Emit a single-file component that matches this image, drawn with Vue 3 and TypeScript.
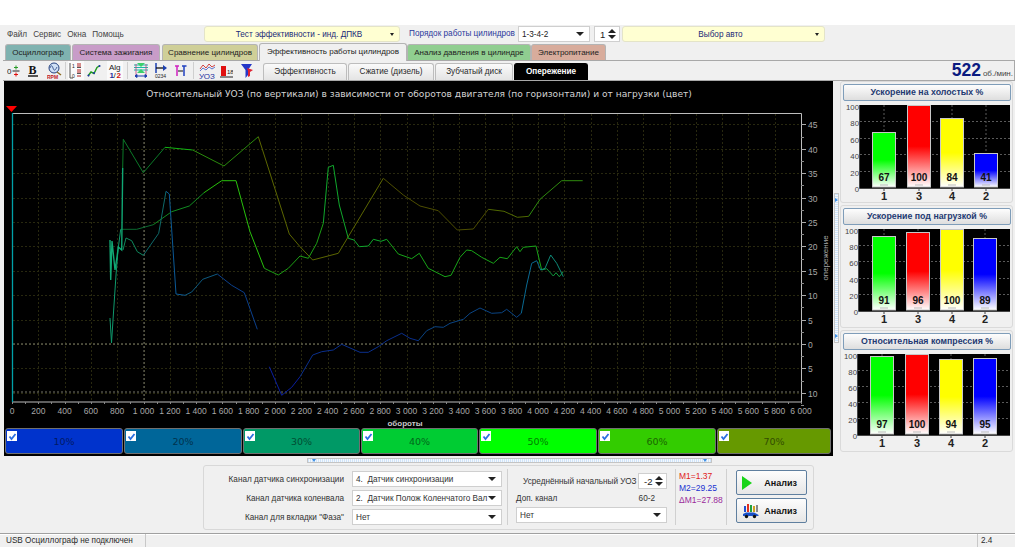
<template>
  <div class="app">
    <div class="topbar">
      <div class="menu">
        <span>Файл</span><span>Сервис</span><span>Окна</span><span>Помощь</span>
      </div>
      <div class="combo yellow test-combo"><span class="combo-text">Тест эффективности - инд. ДПКВ</span><i class="arrow small"></i></div>
      <span class="order-label">Порядок работы цилиндров</span>
      <div class="combo order-combo"><span>1-3-4-2</span><i class="arrow"></i></div>
      <div class="spin order-spin"><span>1</span><div class="spin-btns"><i class="up"></i><i class="down"></i></div></div>
      <div class="combo yellow auto-combo"><span class="combo-text">Выбор авто</span><i class="arrow small"></i></div>
    </div>

    <div class="tabs">
      <div v-for="t in tabs" :key="t.name" class="tab" :class="{ active: t.active }" :style="{ width: t.w + 'px', background: t.bg }">{{ t.name }}</div>
    </div>

    <div class="toolbar">
      <div class="icons">
        <svg class="ic" width="13" height="16" viewBox="0 0 13 16">
          <text x="0" y="11" font-size="8" fill="#222" font-family="Liberation Sans">0</text>
          <path d="M5.500 8h7" stroke="#222" />
          <path d="M9 2.500v4M7 4.500h4" stroke="#2a9a2a" />
          <path d="M9 9.500v4M7 11.500h4" stroke="#e01010" />
        </svg>
        <svg class="ic gap8" width="11" height="16" viewBox="0 0 11 16">
          <text x="0.500" y="11" font-size="12" font-weight="700" fill="#111" font-family="Liberation Serif">B</text>
          <path d="M0 13h10" stroke="#111" stroke-width="1.400" />
        </svg>
        <svg class="ic gap8" width="15" height="18" viewBox="0 0 15 18">
          <circle cx="7" cy="6" r="5" fill="#cfe0f5" stroke="#23407f" />
          <path d="M3 6c1-3 2-3 3 0s2 3 4-1" fill="none" stroke="#23407f" stroke-width=".8" />
          <path d="M10 10l4 3" stroke="#8a6a20" stroke-width="1.400" />
          <text x="0" y="16.500" font-size="5" font-weight="700" fill="#c02020" font-family="Liberation Sans">RPM</text>
        </svg>
        <span class="sep sep-a"></span>
        <div class="pressed">
          <svg width="14" height="18" viewBox="0 0 14 18">
            <path d="M1 1v15h3" fill="none" stroke="#555" />
            <text x="3" y="6" font-size="5" fill="#222" font-family="Liberation Sans">1</text>
            <path d="M8 2h4M8 4h4M8 8h4M8 10h4M8 14h4" stroke="#b02020" />
            <path d="M8 5.500h4M8 11.500h4" stroke="#555" />
            <text x="3" y="16" font-size="5" fill="#222" font-family="Liberation Sans">0</text>
          </svg>
        </div>
        <svg class="ic gap3" width="14" height="14" viewBox="0 0 14 14">
          <path d="M1 12l3-4 3 1.500 3-6 3-2" fill="none" stroke="#1f9a1f" stroke-width="1.400" />
          <circle cx="1.500" cy="11.500" r="1" fill="#2030b0" /><circle cx="7" cy="9" r="1" fill="#2030b0" /><circle cx="12.500" cy="2" r="1" fill="#2030b0" />
        </svg>
        <div class="pressed alg">
          <svg width="14" height="18" viewBox="0 0 14 18">
            <text x="1" y="7.500" font-size="8" fill="#222" font-family="Liberation Sans">Alg</text>
            <text x="1.500" y="16" font-size="8" font-weight="700" fill="#1c2fa0" font-family="Liberation Sans">1</text>
            <text x="5.500" y="16" font-size="8" fill="#222" font-family="Liberation Sans">/</text>
            <text x="8.500" y="16" font-size="8" font-weight="700" fill="#d01010" font-family="Liberation Sans">2</text>
          </svg>
        </div>
        <span class="sep sep-b"></span>
        <svg class="ic" width="16" height="17" viewBox="0 0 16 17">
          <path d="M1 3h14M1 5.500h14M1 8h14" stroke="#18b8a8" />
          <path d="M4 1l4 4 4-4zM4 11l4-4 4 4z" fill="#3ad06a" />
          <path d="M3 2v12M13 2v12" stroke="#c04080" stroke-width=".8" />
          <path d="M2 14h12M2 14l2-1.500v3zM14 14l-2-1.500v3z" stroke="#1c3fb0" fill="#1c3fb0" />
        </svg>
        <svg class="ic gap5" width="14" height="17" viewBox="0 0 14 17">
          <path d="M2 1v10" stroke="#1c3fb0" stroke-width="1.500" />
          <path d="M2 6h8" stroke="#111" stroke-width="1.300" />
          <path d="M13 6l-4-3v6z" fill="#1c3fb0" />
          <text x="1" y="16" font-size="5" fill="#222" font-family="Liberation Sans">0234</text>
        </svg>
        <svg class="ic gap6" width="13" height="14" viewBox="0 0 13 14">
          <path d="M1 2h4M3 2v10" stroke="#d020c0" stroke-width="1.500" fill="none" />
          <path d="M8 2h4.500M10 2v10" stroke="#2040c0" stroke-width="1.500" fill="none" />
          <path d="M4 7h5" stroke="#111" />
        </svg>
        <span class="sep sep-c"></span>
        <svg class="ic" width="17" height="18" viewBox="0 0 17 18">
          <path d="M1 7l3-4 3 3 3-4 3 3 3-2" fill="none" stroke="#d04040" />
          <path d="M1 9l3-3 3 2 3-3 3 2 3-2" fill="none" stroke="#2040c0" stroke-width=".7" />
          <text x="0" y="17" font-size="8" fill="#1c2fa0" font-family="Liberation Sans">УОЗ</text>
        </svg>
        <svg class="ic gap4" width="13" height="14" viewBox="0 0 13 14">
          <path d="M1 2h5v10H1z" fill="#e01010" />
          <text x="7" y="10" font-size="6" fill="#222" font-family="Liberation Sans">18</text>
          <path d="M0 13h13" stroke="#222" />
        </svg>
        <svg class="ic gap7" width="14" height="16" viewBox="0 0 14 16">
          <path d="M1 1h11L8 7v5L5.500 15V7z" fill="#2436c8" />
          <path d="M7 5l6 2-3 2v4l-2 1V8z" fill="#e02030" />
        </svg>
      </div>
      <div class="subtabs">
        <div v-for="s in subtabs" :key="s.name" class="subtab" :class="{ current: s.current }" :style="{ width: s.w + 'px' }">{{ s.name }}</div>
      </div>
      <div class="rpm"><b>522</b><span>об./мин.</span></div>
    </div>

    <div class="main">
      <div class="chart">
        <svg class="plot" width="829" height="347" viewBox="4 81 829 347">
          <text x="419" y="96.500" class="title">Относительный УОЗ (по вертикали) в зависимости от оборотов двигателя (по горизонтали) и от нагрузки (цвет)</text>
          <path d="M6 106h11l-5.500 6z" fill="#ff0000" />
          <line v-for="x in gridX" :key="'gx' + x" :x1="x" y1="114" :x2="x" y2="402" class="grid" />
          <line v-for="y in gridY" :key="'gy' + y" x1="13" :y1="y" x2="801" :y2="y" class="grid" />
          <line x1="144" y1="114" x2="144" y2="402" class="grid-main" />
          <line x1="13" y1="344" x2="801" y2="344" class="grid-main thick" />
          <line x1="13" y1="392" x2="801" y2="392" class="grid-main" />
          <path d="M12.500 113.500H801.500V402H12.500" fill="none" stroke="#bdbdbd" />
          <line x1="12.500" y1="113" x2="12.500" y2="402" stroke="#00a0a8" stroke-width="1.300" />
          <polyline v-for="(c, i) in curves" :key="i" :points="c.points" fill="none" :stroke="c.color" :stroke-width="c.width || 1" />
          <line v-for="t in yMinor" :key="'ym' + t" x1="801" :y1="t" x2="804" :y2="t" stroke="#888" />
          <line v-for="t in yTicks" :key="'yt' + t.label" x1="801" :y1="t.y" x2="806" :y2="t.y" stroke="#aaa" />
          <text v-for="t in yTicks" :key="'yl' + t.label" x="808" :y="t.y + 3" class="axis">{{ t.label }}</text>
          <line v-for="t in xMinor" :key="'xm' + t" :x1="t" y1="402" :x2="t" y2="404" stroke="#888" />
          <text v-for="t in xTicks" :key="'xl' + t.label" :x="t.x" y="414" class="axis mid">{{ t.label }}</text>
          <text x="405" y="425.500" class="axis mid strong">обороты</text>
          <text class="axis mid ytitle" transform="translate(828 258) rotate(-90)">опережение</text>
        </svg>
        <div class="loads">
          <div v-for="l in loads" :key="l.name" class="load" :style="{ background: l.bg, color: l.fg, width: l.w + 'px' }">
            <span class="check">
              <svg width="9" height="9" viewBox="0 0 9 9"><path d="M1.500 4.500l2 2.500 4-5" fill="none" stroke="#2a6fe0" stroke-width="1.800" /></svg>
            </span>
            {{ l.name }}
          </div>
        </div>
      </div>

      <div class="vsplit"><div class="vgrip"><i class="tri-r"></i><i class="tri-r"></i></div></div>

      <div class="side">
        <div v-for="(p, pi) in panels" :key="p.title" class="panel" :style="{ height: p.height + 'px' }">
          <div class="panel-btn">{{ p.title }}</div>
          <svg class="bars" width="170" height="100" viewBox="0 0 170 100">
            <defs>
              <linearGradient v-for="c in barColors" :id="'b' + pi + c.slice(1)" :key="c" x1="0" y1="0" x2="0" y2="1">
                <stop offset="0" :stop-color="c" />
                <stop offset=".5" :stop-color="c" />
                <stop offset="1" stop-color="#ffffff" />
              </linearGradient>
            </defs>
            <rect :x="p.left" y="2" :width="167 - p.left" :height="p.h + 1" fill="#000" />
            <line v-for="g in [20, 40, 60, 80]" :key="g" :x1="p.left" :y1="barY(p, g)" x2="167" :y2="barY(p, g)" class="bar-grid" />
            <line v-for="b in p.bars" :key="'v' + b.x" :x1="b.x + 12" y1="2" :x2="b.x + 12" :y2="2 + p.h" class="bar-grid" />
            <template v-for="g in [0, 20, 40, 60, 80, 100]" :key="'t' + g">
              <line :x1="p.left - 1" :y1="barY(p, g)" :x2="p.left" :y2="barY(p, g)" stroke="#555" />
              <text :x="p.left - 1" :y="barY(p, g) + 4" class="bar-axis">{{ g }}</text>
            </template>
            <path :d="`M${p.left - 0.5} 2V${p.h + 3.5}H167`" fill="none" stroke="#444" />
            <template v-for="b in p.bars" :key="b.label">
              <rect :x="b.x + 0.5" :y="barY(p, b.v)" width="23" :height="p.h + 2 - barY(p, b.v)" :fill="`url(#b${pi}${b.color.slice(1)})`" stroke="#c8c8c8" />
              <text :x="b.x + 12" :y="p.h - 4" class="bar-val">{{ b.v }}</text>
              <line :x1="b.x + 8" :y1="p.h" :x2="b.x + 16" :y2="p.h" stroke="#bbb" />
              <line :x1="b.x + 12" :y1="p.h + 3" :x2="b.x + 12" :y2="p.h + 6" stroke="#444" />
              <text :x="b.x + 12" :y="p.h + 15" class="bar-label">{{ b.label }}</text>
            </template>
          </svg>
        </div>
      </div>
    </div>

    <div class="hsplit"><div class="hgrip"><i class="tri-d"></i><i class="tri-d"></i></div></div>

    <div class="settings">
      <div class="channels">
        <template v-for="c in channels" :key="c.label">
          <label>{{ c.label }}</label>
          <div class="combo white"><span>{{ c.value }}</span><i class="arrow"></i></div>
        </template>
      </div>
      <div class="vline"></div>
      <div class="uoz">
        <div class="uoz-row">
          <span>Усреднённый начальный УОЗ</span>
          <div class="spin uoz-spin"><span>-2</span><div class="spin-btns"><i class="up"></i><i class="down"></i></div></div>
        </div>
        <div class="extra-row"><span>Доп. канал</span><span>60-2</span></div>
        <div class="combo white"><span>Нет</span><i class="arrow"></i></div>
      </div>
      <div class="vline"></div>
      <div class="stats">
        <div class="m1">M1=1.37</div>
        <div class="m2">M2=29.25</div>
        <div class="m3">ΔM1=27.88</div>
      </div>
      <div class="vline"></div>
      <div class="actions">
        <button class="run">
          <svg width="10" height="14" viewBox="0 0 10 14"><path d="M0 0l10 7-10 7z" fill="#19d419" /></svg>
          <b>Анализ</b>
        </button>
        <button class="run">
          <svg width="17" height="16" viewBox="0 0 17 16">
            <path d="M2 3h2v6H2z" fill="#2050d0" /><path d="M5 1h2v8H5z" fill="#e03020" /><path d="M8 2h2v7H8z" fill="#20a040" /><path d="M11 3h2v6h-2z" fill="#d0a020" /><path d="M14 2h2v7h-2z" fill="#8a8a8a" />
            <path d="M1 13v-2l3-1.500h8l3 1.500 1.500 1v1z" fill="#1a50c8" />
            <circle cx="4.500" cy="13.500" r="1.700" fill="#111" /><circle cx="12.500" cy="13.500" r="1.700" fill="#111" />
          </svg>
          <b>Анализ</b>
        </button>
      </div>
    </div>

    <div class="status">
      <div class="st-a">USB Осциллограф не подключен</div>
      <div class="st-b"></div>
      <div class="st-c">2.4</div>
    </div>
  </div>
</template>

<script setup lang="ts">
interface Bar {
  label: string
  v: number
  x: number
  color: string
}

interface Panel {
  title: string
  height: number
  left: number
  h: number
  bars: Bar[]
}

const tabs = [
  { name: 'Осциллограф', w: 66, bg: '#7fb2b0' },
  { name: 'Система зажигания', w: 88, bg: '#c89cc8' },
  { name: 'Сравнение цилиндров', w: 96, bg: '#cfcf98' },
  { name: 'Эффективность работы цилиндров', w: 148, bg: '#f0f0f0', active: true },
  { name: 'Анализ давления в цилиндре', w: 124, bg: '#90ce90' },
  { name: 'Электропитание', w: 75, bg: '#d8ac9c' }
]

const subtabs = [
  { name: 'Эффективность', w: 84 },
  { name: 'Сжатие (дизель)', w: 86 },
  { name: 'Зубчатый диск', w: 78 },
  { name: 'Опережение', w: 74, current: true }
]

const loads = [
  { name: '10%', bg: '#0033cc', fg: '#001a66', w: 118 },
  { name: '20%', bg: '#006699', fg: '#00334d', w: 118 },
  { name: '30%', bg: '#009966', fg: '#004d33', w: 117 },
  { name: '40%', bg: '#00cc33', fg: '#00661a', w: 117 },
  { name: '50%', bg: '#00ff00', fg: '#008000', w: 118 },
  { name: '60%', bg: '#33cc00', fg: '#1a6600', w: 118 },
  { name: '70%', bg: '#669900', fg: '#334d00', w: 114 }
]

const channels = [
  { label: 'Канал датчика синхронизации', value: '4.  Датчик синхронизации' },
  { label: 'Канал датчика коленвала', value: '2.  Датчик Полож Коленчатого Вал' },
  { label: 'Канал для вкладки "Фаза"', value: 'Нет' }
]

// x = 12 + rpm * 0.1315, y = 344 - value * 4.88
const rpmX = (rpm: number) => 12 + rpm * 0.1315
const valY = (v: number) => 344 - v * 4.88

const gridX: number[] = []
const xTicks: { x: number; label: string }[] = []
const xMinor: number[] = []
for (let r = 0; r <= 6000; r += 200) {
  const x = Math.round(rpmX(r)) + 0.5
  if (r > 0 && r < 6000) gridX.push(x)
  xTicks.push({ x: rpmX(r), label: r >= 1000 ? `${Math.floor(r / 1000)} ${String(r % 1000).padStart(3, '0')}` : String(r) })
}
for (let r = 0; r <= 6000; r += 100) xMinor.push(Math.round(rpmX(r)) + 0.5)

const gridY: number[] = []
const yTicks: { y: number; label: string }[] = []
const yMinor: number[] = []
for (let v = 45; v >= -10; v -= 5) {
  const y = Math.round(valY(v)) + 0.5
  gridY.push(y)
  yTicks.push({ y, label: String(Math.abs(v)) })
  yMinor.push(Math.round(valY(v - 2.5)) + 0.5)
}

const curves: { points: string; color: string; width?: number }[] = [
  // верхняя кривая
  { color: '#0b7a28', points: '123.3,139.3 143.3,172.7 165,147.3' },
  { color: '#12b512', points: '165,147.3 192.7,150' },
  { color: '#2a8a0c', points: '192.7,150 224,166 258.3,136.7' },
  { color: '#5c6600', points: '258.3,136.7 270,173.3 289.3,234 300,246.7 312.7,260 338.3,253.3 383.3,178.3' },
  { color: '#4e4e00', points: '383.3,178.3 403.3,195 420,206 438.3,210.7 457.3,230 473.3,229 488.3,209.3' },
  { color: '#506800', points: '488.3,209.3 504,211.3 517.3,217.3 528.7,216.3' },
  { color: '#2f8a0e', points: '528.7,216.3 540,199.3 561.7,180.7 582.7,180.7' },
  // средняя кривая
  { color: '#0b6b30', points: '120.7,229.3 136.7,229.3 153.3,224.7' },
  { color: '#118c22', points: '153.3,224.7 171.7,211.7 189.3,206 204,192.7' },
  { color: '#28c00c', points: '204,192.7 221.7,180.7 236,180.7 250,231.7 264.3,268.3' },
  { color: '#1c9e14', points: '264.3,268.3 278.3,275 288.3,268.3 300,256 308.3,258.3 316.7,243.3 323.3,223.3' },
  { color: '#10a82c', points: '323.3,223.3 328.3,167.3 333.3,165.3 339.3,205 348.3,238.3 354,240 359.3,246.7 368.3,246 373.3,239.3 381,241.3 386.7,239.3' },
  { color: '#18a418', points: '386.7,239.3 398.3,254 411.7,258.7 419.3,253.3 428.3,268.3 445,276.7 451,275.3 460,257.3 466.7,250 471.7,250.7 481.7,257.3 493.3,263.3 500,257.3 507.3,258.7 516.7,246.7 520,251.7 523.3,247.3 536,246 541.7,270' },
  { color: '#129a3c', points: '541.7,270 546.7,268.7 553.3,276 556,272.7 559.3,276.7 563.3,271.7' },
  // нижняя кривая
  { color: '#0f8a5e', points: '123,250 126,238 131.7,240.7 137.3,251.7 143.3,255.3' },
  { color: '#0f6a6a', points: '143.3,255.3 158.7,233.3 166,191.3' },
  { color: '#0b5a96', points: '166,191.3 169.3,194 176,294 185,295.3' },
  { color: '#0e5a80', points: '185,295.3 191.7,292 202.7,279.3 217.3,274' },
  { color: '#0b3f8c', points: '217.3,274 231.7,285.3 244.3,292.7 257.3,329.3' },
  { color: '#0a1fa0', points: '269.3,366.7 281.7,395.3 291.7,387.3 300,376.7' },
  { color: '#0a2f8c', points: '300,376.7 304,370 312.7,355 321.7,351.7 333.3,350 341.7,344.3 360,352.3 368.3,352.3 378.3,346.7 386.7,340.7 401.7,333.3 410,338.3 418.3,340.7' },
  { color: '#0a4484', points: '418.3,340.7 426.7,330.7 435,326.7 443.3,327.3 450,323.3 463.3,319.3 470,313.3 480,308 491.7,313.3 501.7,312.7 506.7,309.3 516.7,317.3 521.3,313.3' },
  { color: '#0a6a92', points: '521.3,313.3 526.7,285 531.7,263.3 536.7,260.7 540.7,270' },
  { color: '#0e8a78', points: '540.7,270 545,268.3 550.7,255 556.7,263.3 563.3,276.7' },
  // шум на низких оборотах
  { color: '#0f9a6c', points: '110,318 111.500,343 113,320 116,275 118,250 120.7,229.3' },
  { color: '#10a874', points: '110,240 110.700,280 112,241 115,270 117,257 118.3,247 121.7,250 122.7,168', width: 1.4 },
  { color: '#0b7a28', points: '122.7,168 123.3,139.3' }
]

const colors = { c1: '#00ff00', c3: '#ff0000', c4: '#ffff00', c2: '#0000ff' }
const barColors = [colors.c1, colors.c3, colors.c4, colors.c2]

const makeBars = (xs: number[], vals: number[]): Bar[] => [
  { label: '1', v: vals[0], x: xs[0], color: colors.c1 },
  { label: '3', v: vals[1], x: xs[1], color: colors.c3 },
  { label: '4', v: vals[2], x: xs[2], color: colors.c4 },
  { label: '2', v: vals[3], x: xs[3], color: colors.c2 }
]

const panels: Panel[] = [
  { title: 'Ускорение на холостых %', height: 122, left: 17, h: 82, bars: makeBars([29, 64, 97, 131], [67, 100, 84, 41]) },
  { title: 'Ускорение под нагрузкой %', height: 123, left: 16, h: 81, bars: makeBars([29, 63, 97, 130], [91, 96, 100, 89]) },
  { title: 'Относительная компрессия %', height: 122, left: 15, h: 80, bars: makeBars([27, 62, 96, 130], [97, 100, 94, 95]) }
]

const barY = (p: Panel, v: number) => Math.round(2 + p.h - (v / 100) * p.h) + 0.5
</script>

<style scoped>
.app {
  width: 1015px;
  height: 522px;
  margin-top: 25px;
  background: #f0f0f0;
  display: flex;
  flex-direction: column;
  font-family: "Liberation Sans", sans-serif;
  font-size: 8.200px;
  color: #2a2a2a;
  overflow: hidden;
}
.topbar {
  height: 18px;
  display: flex;
  align-items: flex-start;
  padding-top: 1px;
  box-sizing: border-box;
}
.menu {
  width: 204px;
  padding-left: 7px;
  box-sizing: border-box;
  display: flex;
  gap: 6px;
  line-height: 18px;
  color: #444;
}
.combo {
  height: 16px;
  border: 1px solid #cfcfcf;
  box-sizing: border-box;
  display: flex;
  align-items: center;
  padding: 0 5px 0 3px;
  background: #fff;
  position: relative;
  justify-content: space-between;
}
.yellow {
  background: #ffffd2;
  border-color: #e4e4c8;
  border-radius: 3px;
  color: #1a2a78;
}
.combo-text {
  flex: 1;
  text-align: center;
}
.test-combo { width: 196px; }
.order-label {
  width: 109px;
  margin-left: 9px;
  color: #2b3a9c;
  line-height: 16px;
  white-space: nowrap;
}
.order-combo { width: 72px; color: #222; }
.order-spin { width: 26px; margin-left: 4px; }
.auto-combo { width: 203px; margin-left: 2px; }
.arrow {
  width: 0;
  height: 0;
  border-left: 4px solid transparent;
  border-right: 4px solid transparent;
  border-top: 4px solid #222;
}
.arrow.small {
  border-left-width: 2.500px;
  border-right-width: 2.500px;
  border-top-width: 3px;
}
.spin {
  height: 16px;
  background: #fff;
  border: 1px solid #cfcfcf;
  box-sizing: border-box;
  display: flex;
  align-items: center;
  justify-content: space-between;
  padding: 0 3px 0 5px;
  font-size: 9.500px;
  color: #222;
}
.spin-btns {
  display: flex;
  flex-direction: column;
  gap: 2px;
}
.spin-btns i {
  width: 0;
  height: 0;
  border-left: 4px solid transparent;
  border-right: 4px solid transparent;
}
.spin-btns .up { border-bottom: 4px solid #222; }
.spin-btns .down { border-top: 4px solid #222; }

.tabs {
  height: 17px;
  display: flex;
  align-items: flex-end;
  padding-left: 5px;
}
.tab {
  height: 16px;
  box-sizing: border-box;
  border: 1px solid #b4b4b4;
  border-bottom: none;
  border-radius: 3px 3px 0 0;
  text-align: center;
  line-height: 15px;
  white-space: nowrap;
  color: #222;
  font-size: 8px;
}
.tab:nth-child(2) { margin-left: 1px; }
.tab:nth-child(3) { margin-left: 2px; }
.tab:nth-child(4) { margin-left: 1px; }
.tab.active {
  position: relative;
  z-index: 1;
  margin-bottom: -1px;
  height: 18px;
}

.toolbar {
  height: 21px;
  margin-left: 3px;
  border: 1px solid #a8a8a8;
  border-width: 1px 1px 1px 0;
  box-sizing: border-box;
  display: flex;
  align-items: flex-end;
}
.icons {
  width: 260px;
  height: 19px;
  padding-left: 4px;
  box-sizing: border-box;
  display: flex;
  align-items: center;
}
.ic { flex: none; }
.gap8 { margin-left: 8px; }
.gap7 { margin-left: 7px; }
.gap6 { margin-left: 6px; }
.gap5 { margin-left: 5px; }
.gap4 { margin-left: 4px; }
.gap3 { margin-left: 3px; }
.sep {
  width: 1px;
  height: 17px;
  background: #cfcfcf;
  flex: none;
}
.sep-a { margin: 0 2px 0 3px; }
.sep-b { margin: 0 5px 0 4px; }
.sep-c { margin: 0 5px 0 6px; }
.pressed {
  background: #fafafa;
  display: flex;
  height: 19px;
  align-items: center;
  padding: 0 1px;
}
.alg { margin-left: 6px; }
.subtabs {
  display: flex;
  height: 17px;
  gap: 1px;
  flex: none;
}
.subtab {
  box-sizing: border-box;
  border: 1px solid #bdbdbd;
  border-bottom: none;
  border-radius: 3px 3px 0 0;
  background: linear-gradient(#fafafa, #e4e4e4);
  text-align: center;
  line-height: 16px;
  white-space: nowrap;
}
.subtab.current {
  background: #000;
  border-color: #000;
  color: #fff;
  font-weight: 700;
}
.rpm {
  margin-left: auto;
  padding-right: 1px;
  display: flex;
  align-items: baseline;
  color: #0a1a80;
  height: 19px;
}
.rpm b {
  font-size: 17.500px;
  line-height: 19px;
}
.rpm span {
  font-size: 8px;
  color: #444;
  margin-left: 2px;
}

.main {
  height: 375px;
  display: flex;
  padding-left: 4px;
}
.chart {
  width: 829px;
  background: #000;
  display: flex;
  flex-direction: column;
}
.plot { display: block; }
.title {
  fill: #d4d4d4;
  font-family: "DejaVu Sans", sans-serif;
  font-size: 9.100px;
  text-anchor: middle;
}
.grid {
  stroke: #28280f;
  stroke-dasharray: 2 2;
}
.grid-main {
  stroke: #76766a;
  stroke-dasharray: 2 2;
}
.grid-main.thick { stroke: #5a5a48; stroke-width: 1.300; }
.axis {
  fill: #a8a8a8;
  font-size: 8.500px;
}
.axis.mid { text-anchor: middle; }
.axis.strong { fill: #c8c8c8; font-weight: 700; font-size: 8px; }
.axis.ytitle { font-size: 8px; }
.loads {
  display: flex;
  gap: 1px;
  padding-left: 1px;
  height: 26px;
}
.load {
  position: relative;
  box-sizing: border-box;
  border: 1px solid #707070;
  border-radius: 3px;
  text-align: center;
  font-family: "DejaVu Sans", sans-serif;
  font-size: 9.500px;
  line-height: 25px;
}
.check {
  position: absolute;
  left: 1px;
  top: 2px;
  width: 10px;
  height: 10px;
  background: #fff;
  display: flex;
  align-items: center;
  justify-content: center;
}

.vsplit {
  width: 7px;
  padding: 112px 0 0 1px;
  box-sizing: border-box;
}
.vgrip {
  width: 5px;
  height: 150px;
  box-sizing: border-box;
  border: 1px solid #c4c4c4;
  background: repeating-linear-gradient(#cfe4fa 0 1px, #f4f8fc 1px 2px);
  display: flex;
  flex-direction: column;
  justify-content: space-between;
  padding: 4px 0;
}
.tri-r {
  width: 0;
  height: 0;
  border-left: 3px solid #3b8ee6;
  border-top: 2px solid transparent;
  border-bottom: 2px solid transparent;
}
.side {
  width: 173px;
  display: flex;
  flex-direction: column;
  gap: 2px;
}
.panel {
  box-sizing: border-box;
  border: 1px solid #dadada;
  border-radius: 3px;
  padding: 2px 1px 0 2px;
}
.panel-btn {
  height: 17px;
  box-sizing: border-box;
  border: 1px solid #7f9db9;
  border-radius: 2px;
  background: linear-gradient(#fdfdfd, #dedede);
  color: #1f3a72;
  font-weight: 700;
  font-size: 8.800px;
  text-align: center;
  line-height: 15px;
}
.bars {
  display: block;
  margin-top: 2px;
  overflow: visible;
}
.bar-grid {
  stroke: #5a5a5a;
  stroke-dasharray: 2 2;
}
.bar-axis {
  fill: #444;
  font-size: 7.800px;
  text-anchor: end;
}
.bar-val {
  fill: #111;
  font-size: 10px;
  font-weight: 700;
  text-anchor: middle;
}
.bar-label {
  fill: #222;
  font-size: 11px;
  font-weight: 700;
  text-anchor: middle;
}

.hsplit {
  height: 9px;
  padding: 2px 0 0 307px;
  box-sizing: border-box;
}
.hgrip {
  width: 405px;
  height: 5px;
  box-sizing: border-box;
  border: 1px solid #c4c4c4;
  background: repeating-linear-gradient(90deg, #cfe4fa 0 1px, #f4f8fc 1px 2px);
  display: flex;
  justify-content: space-between;
  padding: 0 4px;
}
.tri-d {
  width: 0;
  height: 0;
  border-top: 3px solid #3b8ee6;
  border-left: 2px solid transparent;
  border-right: 2px solid transparent;
}

.settings {
  width: 611px;
  height: 65px;
  margin-left: 203px;
  box-sizing: border-box;
  border: 1px solid #d8d8d8;
  border-radius: 3px;
  display: flex;
  color: #333;
}
.channels {
  width: 303px;
  box-sizing: border-box;
  padding: 5px 0 0 10px;
  display: grid;
  grid-template-columns: 130px 150px;
  column-gap: 8px;
  row-gap: 3px;
  grid-auto-rows: 16px;
  align-items: center;
}
.channels label {
  text-align: right;
  white-space: nowrap;
}
.white { white-space: pre; }
.vline {
  width: 1px;
  margin: 3px 0 4px;
  background: #d0d0d0;
  flex: none;
}
.uoz {
  width: 167px;
  box-sizing: border-box;
  padding: 7px 8px 0 8px;
}
.uoz-row {
  height: 16px;
  display: flex;
  justify-content: space-between;
  align-items: center;
  padding-left: 7px;
  white-space: nowrap;
}
.uoz-spin { width: 29px; }
.extra-row {
  height: 18px;
  display: flex;
  justify-content: space-between;
  align-items: center;
  padding-right: 12px;
}
.stats {
  width: 50px;
  box-sizing: border-box;
  padding: 4px 0 0 3px;
  line-height: 12px;
  font-size: 8.500px;
  white-space: nowrap;
}
.m1 { color: #e02020; }
.m2 { color: #2030d0; }
.m3 { color: #9a2a9a; }
.actions {
  flex: 1;
  padding: 4px 0 0 9px;
  display: flex;
  flex-direction: column;
  gap: 3px;
}
.run {
  width: 71px;
  height: 25px;
  box-sizing: border-box;
  border: 1px solid #5f7f9f;
  border-radius: 2px;
  background: linear-gradient(#fdfdfd, #e6e6e6);
  display: flex;
  align-items: center;
  justify-content: space-between;
  padding: 0 9px 0 5px;
  font-family: inherit;
  font-size: 9px;
  color: #111;
}

.status {
  height: 14px;
  margin-top: 3px;
  border-top: 1px solid #a0a0a0;
  box-shadow: inset 0 1px 0 #fff;
  box-sizing: border-box;
  display: flex;
  line-height: 13px;
}
.st-a {
  width: 145px;
  padding-left: 6px;
  box-sizing: border-box;
  white-space: nowrap;
}
.st-b {
  width: 833px;
  border-left: 1px solid #c8c8c8;
  border-right: 1px solid #c8c8c8;
  box-sizing: border-box;
}
.st-c {
  padding-left: 3px;
}
</style>

<style>
html, body {
  margin: 0;
  background: #fff;
  overflow: hidden;
}
</style>
